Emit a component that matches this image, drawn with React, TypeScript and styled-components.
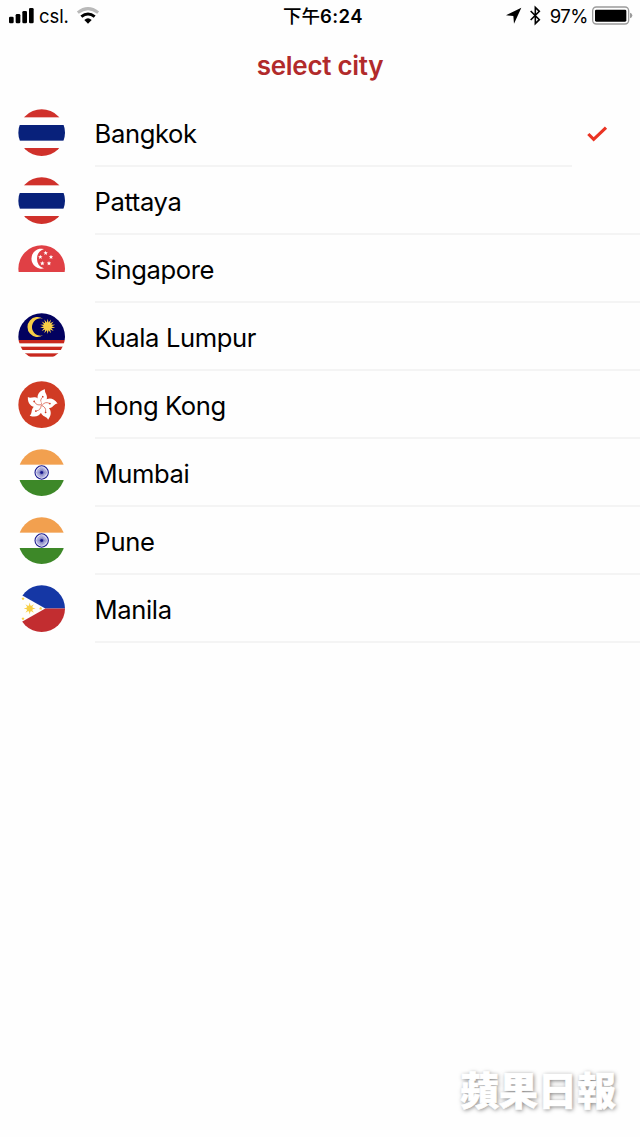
import React from "react";
import styled, { createGlobalStyle } from "styled-components";

const GlobalStyle = createGlobalStyle`
  *, *::before, *::after { box-sizing: border-box; }
  body {
    margin: 0;
    background: #fefefe;
    color: #000;
    font-family: Inter, "Noto Sans CJK TC", sans-serif;
  }
`;

const Screen = styled.div`
  display: flex;
  flex-direction: column;
  height: 1137px;
  width: 640px;
  overflow: hidden;
`;

const StatusBar = styled.header`
  display: grid;
  grid-template-columns: 1fr auto 1fr;
  align-items: center;
  height: 32px;
  padding: 0 7px 0 8px;
  font-size: 18.5px;
  line-height: 32px;
`;

const StatusGroup = styled.div<{ $end?: boolean }>`
  display: flex;
  align-items: center;
  justify-content: ${(p) => (p.$end ? "flex-end" : "flex-start")};
  height: 32px;
  svg { display: block; flex: none; }
`;

const Carrier = styled.span`
  margin: 0 7px 0 4px;
  letter-spacing: -0.1px;
`;

const Clock = styled.span`
  padding-left: 5px;
  font-size: 18.5px;
  font-weight: 600;
  letter-spacing: 0.4px;
`;

const ClockPrefix = styled.span`
  font-weight: 500;
  letter-spacing: 0;
`;

const Percent = styled.span`
  margin: 0 4px 0 9px;
  font-size: 18.5px;
  letter-spacing: -0.5px;
`;

const Title = styled.h1`
  margin: 0;
  height: 67px;
  line-height: 67px;
  text-align: center;
  font-size: 26px;
  font-weight: 600;
  letter-spacing: -0.3px;
  color: #b12a2b;
`;

const CityList = styled.ul`
  margin: 0;
  padding: 0;
  list-style: none;
`;

const CityRow = styled.li`
  display: flex;
  height: 68px;
  padding-left: 18px;
`;

const FlagSlot = styled.div`
  width: 76.500px;
  padding-top: 10px;
  svg { display: block; }
`;

const CityName = styled.div`
  flex: 1;
  height: 68px;
  border-bottom: 2px solid #f4f4f4;
  font-size: 25.6px;
  line-height: 70px;
  letter-spacing: -0.37px;
`;

const Selected = styled.div`
  width: 68px;
  padding: 26px 0 0 15px;
  svg { display: block; }
`;

const Watermark = styled.footer`
  margin: auto 24px 20px auto;
  font-family: "Noto Sans CJK TC", sans-serif;
  font-size: 39px;
  font-weight: 900;
  line-height: 58px;
  color: #fff;
  -webkit-text-stroke: 0.6px #fff;
  text-shadow: 1px 1px 4px rgba(0, 0, 0, 0.5);
`;

const polar = (cx: number, cy: number, r: number, deg: number) => {
  const a = ((deg - 90) * Math.PI) / 180;
  return `${(cx + r * Math.cos(a)).toFixed(2)},${(cy + r * Math.sin(a)).toFixed(2)}`;
};

interface StarProps {
  cx: number;
  cy: number;
  r: number;
  inner: number;
  points: number;
  fill: string;
}

const Star = ({ cx, cy, r, inner, points, fill }: StarProps) => (
  <polygon
    fill={fill}
    points={Array.from({ length: points * 2 }, (_, i) =>
      polar(cx, cy, i % 2 ? inner : r, (i * 180) / points)
    ).join(" ")}
  />
);

type Country = "th" | "sg" | "my" | "hk" | "in" | "ph";

const Thailand = () => (
  <>
    <rect width="141" height="25" fill="#d0312b" />
    <rect y="48" width="141" height="47" fill="#08217b" />
    <rect y="117" width="141" height="25" fill="#d0312b" />
  </>
);

const Singapore = () => (
  <>
    <rect width="141" height="81" fill="#e04045" />
    <path d="M78 12A30 30 0 1 0 78 70A30.500 30.500 0 0 1 78 12Z" fill="#fff" />
    {[[83, 24], [67, 36], [99, 36], [73, 55], [93, 55]].map(([x, y]) => (
      <Star key={`${x}-${y}`} cx={x} cy={y} r={7} inner={3.2} points={5} fill="#fff" />
    ))}
  </>
);

const Malaysia = () => (
  <>
    <rect width="141" height="81" fill="#02015f" />
    <rect y="81" width="141" height="10" fill="#c8281e" />
    <rect y="101" width="141" height="10" fill="#c8281e" />
    <rect y="121" width="141" height="10" fill="#c8281e" />
    <path d="M75 17A30 30 0 1 0 75 67A26 26 0 1 1 75 17Z" fill="#f7ce46" />
    <Star cx={89} cy={40} r={23} inner={12} points={14} fill="#f7ce46" />
  </>
);

const HongKong = () => (
  <>
    <rect width="141" height="141" fill="#d03b24" />
    {[0, 72, 144, 216, 288].map((deg) => (
      <g key={deg} transform={`translate(71 72) rotate(${deg + 10})`}>
        <path d="M0 -1C-18 -8 -26 -35 2 -48C0 -38 14 -33 12 -19C11 -9 5 -5 0 -1Z" fill="#fff" />
        <path d="M0 -2C-6 -9 -7 -16 -2 -23" fill="none" stroke="#d03b24" strokeWidth="1.8" />
        <circle cx="-1" cy="-25" r="2.600" fill="#d03b24" />
      </g>
    ))}
  </>
);

const India = () => (
  <>
    <rect width="141" height="47" fill="#f2a04f" />
    <rect y="93" width="141" height="48" fill="#3d8828" />
    <circle cx="71" cy="70.500" r="20" fill="#f0f0fb" stroke="#15158c" strokeWidth="3.2" />
    {Array.from({ length: 24 }, (_, i) => (
      <path
        key={i}
        d="M71 70.500V54"
        stroke="#15158c"
        strokeWidth="1"
        transform={`rotate(${i * 15} 71 70.5)`}
      />
    ))}
    <circle cx="71" cy="70.500" r="4" fill="#15158c" />
  </>
);

const Philippines = () => (
  <>
    <path d="M0 24V0H141V70.500H82Z" fill="#1537a5" />
    <path d="M0 117V141H141V70.500H82Z" fill="#c22d30" />
    <Star cx={35} cy={70.5} r={18} inner={7} points={8} fill="#f7cf46" />
    <circle cx="35" cy="70.500" r="9" fill="#f7cf46" />
    <Star cx={15} cy={41} r={5} inner={2.8} points={5} fill="#f7cf46" />
    <Star cx={68} cy={70.5} r={5} inner={2.8} points={5} fill="#f7cf46" />
    <Star cx={15} cy={101} r={5} inner={2.8} points={5} fill="#f7cf46" />
  </>
);

const flags: Record<Country, React.FC> = {
  th: Thailand,
  sg: Singapore,
  my: Malaysia,
  hk: HongKong,
  in: India,
  ph: Philippines,
};

const Flag = ({ country, id }: { country: Country; id: string }) => {
  const Artwork = flags[country];
  return (
    <svg width="47" height="47" viewBox="0 0 141 141" aria-hidden="true">
      <clipPath id={id}>
        <circle cx="71" cy="71" r="70" />
      </clipPath>
      <g clipPath={`url(#${id})`}>
        <Artwork />
      </g>
    </svg>
  );
};

const SignalIcon = () => (
  <svg width="27" height="32" viewBox="0 0 81 96" aria-hidden="true">
    <rect x="3" y="50" width="14" height="20" rx="4" />
    <rect x="23" y="42" width="14" height="28" rx="4" />
    <rect x="43" y="33" width="14" height="37" rx="4" />
    <rect x="63" y="24" width="14" height="46" rx="4" />
  </svg>
);

const WifiIcon = () => (
  <svg width="24" height="32" viewBox="0 0 72 96" fill="none" aria-hidden="true">
    <path d="M5.500 38Q36 14 66.500 38" stroke="#b9b9b9" strokeWidth="9" />
    <path d="M16 50Q36 34 56 50" stroke="#000" strokeWidth="9" />
    <path d="M25 60Q36 50 47 60L36 71Z" fill="#000" />
  </svg>
);

const LocationIcon = () => (
  <svg width="16" height="32" viewBox="0 0 48 96" aria-hidden="true">
    <path d="M46 23L0 46L22 48L24 71Z" />
  </svg>
);

const BluetoothIcon = styled(({ className }: { className?: string }) => (
  <svg className={className} width="12" height="32" viewBox="0 0 36 96" fill="none" stroke="#000" strokeWidth="4.800" aria-hidden="true">
    <path d="M5 33L31 59L19 71V22L31 34L5 60" />
  </svg>
))`
  margin-left: 7px;
`;

const BatteryIcon = () => (
  <svg width="41" height="32" viewBox="0 0 123 96" aria-hidden="true">
    <rect x="2" y="21" width="108" height="51" rx="11" fill="none" stroke="#9b9b9b" strokeWidth="4" />
    <rect x="9" y="29" width="94" height="36" rx="4" />
    <path d="M114 38Q121 40 121 46.500Q121 53 114 55Z" fill="#9b9b9b" />
  </svg>
);

const CheckIcon = () => (
  <svg width="21" height="20" viewBox="0 0 63 60" fill="none" aria-hidden="true">
    <path d="M4 27L20 43L57 8" stroke="#ea3323" strokeWidth="9.500" />
  </svg>
);

interface City {
  name: string;
  country: Country;
  selected?: boolean;
}

const cities: City[] = [
  { name: "Bangkok", country: "th", selected: true },
  { name: "Pattaya", country: "th" },
  { name: "Singapore", country: "sg" },
  { name: "Kuala Lumpur", country: "my" },
  { name: "Hong Kong", country: "hk" },
  { name: "Mumbai", country: "in" },
  { name: "Pune", country: "in" },
  { name: "Manila", country: "ph" },
];

export default function App() {
  return (
    <Screen>
      <GlobalStyle />
      <StatusBar>
        <StatusGroup>
          <SignalIcon />
          <Carrier>csl.</Carrier>
          <WifiIcon />
        </StatusGroup>
        <Clock>
          <ClockPrefix>下午</ClockPrefix>6:24
        </Clock>
        <StatusGroup $end>
          <LocationIcon />
          <BluetoothIcon />
          <Percent>97%</Percent>
          <BatteryIcon />
        </StatusGroup>
      </StatusBar>
      <Title>select city</Title>
      <CityList>
        {cities.map((city) => (
          <CityRow key={city.name}>
            <FlagSlot>
              <Flag country={city.country} id={`flag-${city.name.replace(" ", "-")}`} />
            </FlagSlot>
            <CityName>{city.name}</CityName>
            {city.selected && (
              <Selected>
                <CheckIcon />
              </Selected>
            )}
          </CityRow>
        ))}
      </CityList>
      <Watermark>蘋果日報</Watermark>
    </Screen>
  );
}
